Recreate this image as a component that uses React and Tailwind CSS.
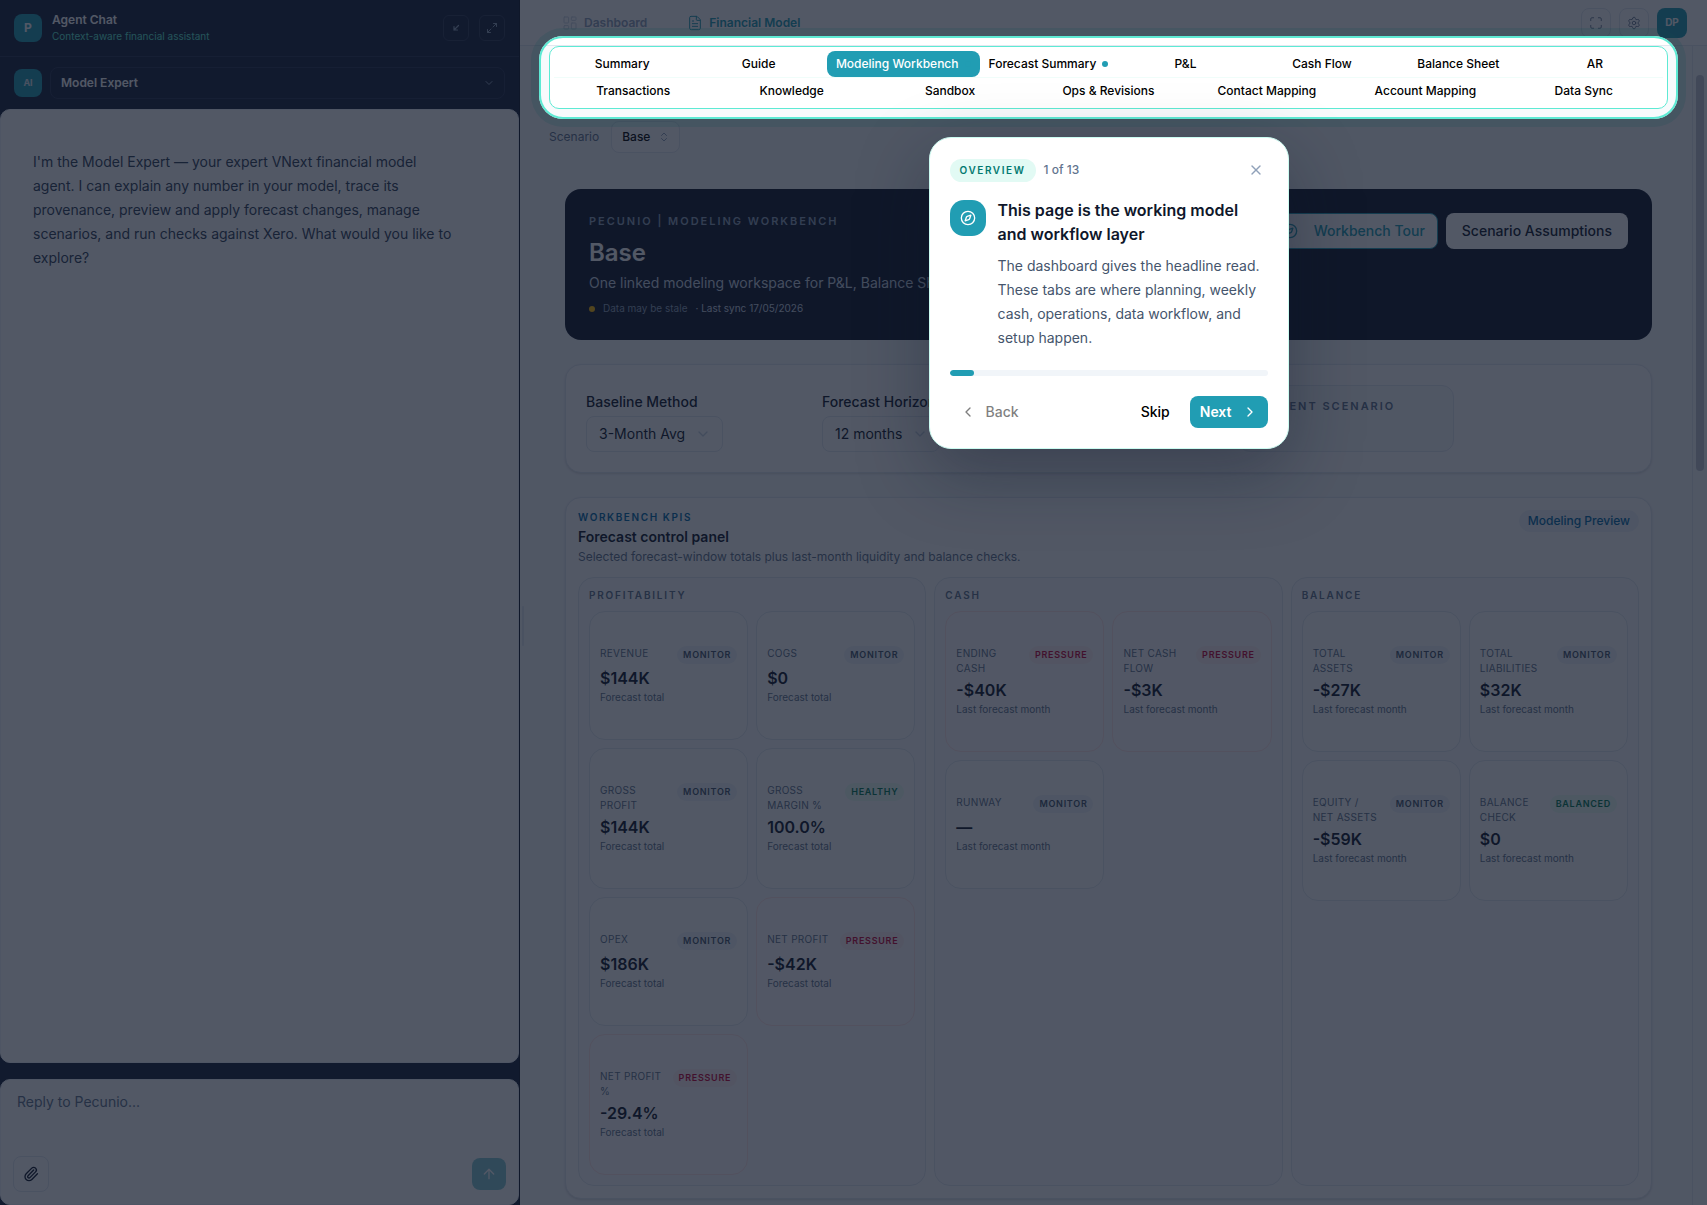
import React, { useState } from 'react';
import {
    ArrowUp,
    ChevronDown,
    ChevronLeft,
    ChevronRight,
    ChevronsUpDown,
    Compass,
    FileText,
    LayoutDashboard,
    Maximize,
    Maximize2,
    Paperclip,
    Settings,
    X,
} from 'lucide-react';

const PRIMARY_TABS = [
    { label: 'Summary' },
    { label: 'Guide' },
    { label: 'Modeling Workbench', active: true, dot: true },
    { label: 'Forecast Summary', dot: true },
    { label: 'P&L' },
    { label: 'Cash Flow' },
    { label: 'Balance Sheet' },
    { label: 'AR' },
];

const SECONDARY_TABS = [
    { label: 'Transactions' },
    { label: 'Knowledge' },
    { label: 'Sandbox' },
    { label: 'Ops & Revisions' },
    { label: 'Contact Mapping' },
    { label: 'Account Mapping' },
    { label: 'Data Sync' },
];

const KPI_GROUPS = [
    {
        title: 'Profitability',
        note: 'Forecast total',
        items: [
            { label: 'Revenue', value: '$144K', status: 'Monitor' },
            { label: 'COGS', value: '$0', status: 'Monitor' },
            { label: 'Gross Profit', value: '$144K', status: 'Monitor' },
            { label: 'Gross Margin %', value: '100.0%', status: 'Healthy' },
            { label: 'OPEX', value: '$186K', status: 'Monitor' },
            { label: 'Net Profit', value: '-$42K', status: 'Pressure' },
            { label: 'Net Profit %', value: '-29.4%', status: 'Pressure' },
        ],
    },
    {
        title: 'Cash',
        note: 'Last forecast month',
        items: [
            { label: 'Ending Cash', value: '-$40K', status: 'Pressure' },
            { label: 'Net Cash Flow', value: '-$3K', status: 'Pressure' },
            { label: 'Runway', value: '—', status: 'Monitor' },
        ],
    },
    {
        title: 'Balance',
        note: 'Last forecast month',
        items: [
            { label: 'Total Assets', value: '-$27K', status: 'Monitor' },
            { label: 'Total Liabilities', value: '$32K', status: 'Monitor' },
            { label: 'Equity / Net Assets', value: '-$59K', status: 'Monitor' },
            { label: 'Balance Check', value: '$0', status: 'Balanced' },
        ],
    },
];

const STATUS_STYLES = {
    Monitor: 'bg-slate-100 text-slate-600',
    Healthy: 'bg-emerald-50 text-emerald-700',
    Balanced: 'bg-emerald-50 text-emerald-700',
    Pressure: 'bg-rose-50 text-rose-700',
};

function ChatPanel() {
    const [message, setMessage] = useState('');

    return (
        <aside className="flex w-[520px] shrink-0 flex-col border-r border-[#0f172a] bg-[#16203a]">
            <header className="flex h-[57px] items-center gap-2.5 border-b border-[#2a3550] px-3.5">
                <div className="flex size-7 items-center justify-center rounded-lg bg-[#219db3] text-xs font-bold text-white">P</div>
                <div className="flex-1">
                    <h2 className="text-xs leading-4 font-semibold text-white">Agent Chat</h2>
                    <p className="text-[10px] leading-4 text-[#5eead4]">Context-aware financial assistant</p>
                </div>
                <div className="flex gap-2.5">
                    <button aria-label="Dock chat" className="flex size-[26px] items-center justify-center rounded-md border border-[#2f3a55] text-slate-400">
                        <svg viewBox="0 0 12 12" className="size-3" fill="none" stroke="currentColor" strokeWidth="1.2" strokeLinecap="round" strokeLinejoin="round">
                            <path d="M8.5 3.5 4 8M4 4.5V8h3.5" />
                        </svg>
                    </button>
                    <button aria-label="Expand chat" className="flex size-[26px] items-center justify-center rounded-md border border-[#2f3a55] text-slate-400">
                        <Maximize2 className="size-3" />
                    </button>
                </div>
            </header>

            <div className="flex items-center gap-2 px-3.5 py-2.5">
                <div className="flex size-7 items-center justify-center rounded-lg bg-[#219db3] text-[9px] font-bold text-slate-200">AI</div>
                <div className="relative flex-1">
                    <select aria-label="Agent" className="h-8 w-full appearance-none rounded-lg border border-[#2a3550] bg-transparent px-2.5 text-xs font-semibold text-white">
                        <option>Model Expert</option>
                    </select>
                    <ChevronDown className="pointer-events-none absolute top-2.5 right-2.5 size-3 text-slate-400" />
                </div>
            </div>

            <div className="flex-1 rounded-[10px] border border-slate-100 bg-white py-10 pr-16 pl-8">
                <p className="text-sm leading-6 text-slate-700">
                    I'm the Model Expert — your expert VNext financial model agent. I can explain any number in your model, trace its
                    provenance, preview and apply forecast changes, manage scenarios, and run checks against Xero. What would you like to
                    explore?
                </p>
            </div>

            <form className="mt-4 flex h-[126px] flex-col justify-between rounded-[10px] border border-slate-100 bg-white p-3" onSubmit={(e) => e.preventDefault()}>
                <textarea
                    aria-label="Message"
                    rows={1}
                    placeholder="Reply to Pecunio..."
                    value={message}
                    onChange={(e) => setMessage(e.target.value)}
                    className="resize-none px-1 text-sm leading-5 text-slate-900 placeholder:text-slate-500"
                />
                <div className="flex items-center justify-between">
                    <button type="button" aria-label="Attach file" className="flex size-9 items-center justify-center rounded-lg border border-slate-200 bg-white text-slate-900">
                        <Paperclip className="size-4" />
                    </button>
                    <button type="submit" aria-label="Send" className="flex h-8 w-[34px] items-center justify-center rounded-lg bg-[#86c9d5] text-white">
                        <ArrowUp className="size-4" />
                    </button>
                </div>
            </form>
        </aside>
    );
}

function TopBar() {
    return (
        <header className="flex h-[46px] shrink-0 items-center justify-between border-b border-slate-200 bg-white pr-5 pl-[42px]">
            <nav className="flex gap-10 text-xs font-semibold">
                <a href="#dashboard" className="flex items-center gap-1.5 text-slate-400">
                    <LayoutDashboard className="size-4 text-slate-300" strokeWidth={1.5} />
                    Dashboard
                </a>
                <a href="#model" className="flex items-center gap-1.5 text-[#219db3]">
                    <FileText className="size-4" strokeWidth={1.5} />
                    Financial Model
                </a>
            </nav>
            <div className="flex gap-2">
                <button aria-label="Full screen" className="flex size-[30px] items-center justify-center rounded-lg border border-slate-200 text-slate-500">
                    <Maximize className="size-3.5" strokeWidth={1.5} />
                </button>
                <button aria-label="Settings" className="flex size-[30px] items-center justify-center rounded-lg border border-slate-200 text-slate-500">
                    <Settings className="size-3.5" strokeWidth={1.5} />
                </button>
                <button className="flex size-[30px] items-center justify-center rounded-lg bg-[#219db3] text-[10px] font-bold text-white">DP</button>
            </div>
        </header>
    );
}

function TabRow({ tabs }) {
    return (
        <div className="flex">
            {tabs.map((tab) => (
                <button
                    key={tab.label}
                    className={`flex h-[26px] flex-1 items-center justify-center gap-1.5 rounded-lg px-[9px] text-xs font-medium whitespace-nowrap ${tab.active ? 'bg-[#219db3] text-white' : 'text-black'}`}
                >
                    {tab.label}
                    {tab.dot && <span className="size-1.5 rounded-full bg-[#219db3]" />}
                </button>
            ))}
        </div>
    );
}

function Hero() {
    return (
        <section className="flex items-start justify-between rounded-2xl bg-[#0f172a] p-6">
            <div>
                <p className="text-[11px] leading-4 font-semibold tracking-[0.18em] text-slate-400 uppercase">Pecunio | Modeling Workbench</p>
                <h1 className="mt-2 text-2xl font-semibold text-white">Base</h1>
                <p className="mt-1 text-sm text-slate-300">One linked modeling workspace for P&L, Balance Sheet</p>
                <p className="mt-2 flex items-center gap-2 text-[10px] leading-[15px] text-slate-400">
                    <span className="size-1.5 rounded-full bg-amber-400" />
                    Data may be stale
                    <span className="text-slate-300">· Last sync 17/05/2026</span>
                </p>
            </div>
            <div className="flex gap-2 text-sm font-medium">
                <button className="flex h-9 items-center gap-4 rounded-lg border border-[#219db3] bg-white px-3 text-[#219db3]">
                    <Compass className="size-4" />
                    Workbench Tour
                </button>
                <button className="h-9 rounded-lg bg-white px-4 text-slate-900">Scenario Assumptions</button>
            </div>
        </section>
    );
}

function Field({ id, label, value }) {
    return (
        <div className="flex flex-col items-start justify-end gap-1">
            <label htmlFor={id} className="text-sm font-medium text-slate-900">{label}</label>
            <div className="relative">
                <select id={id} className="h-9 appearance-none rounded-lg border border-slate-200 bg-transparent pr-9 pl-3 text-sm text-slate-900">
                    <option>{value}</option>
                </select>
                <ChevronDown className="pointer-events-none absolute top-2.5 right-3 size-4 text-slate-300" />
            </div>
        </div>
    );
}

function KpiCard({ label, value, status, note }) {
    const tint = status === 'Pressure' ? 'border-rose-100 bg-[#fffcfd]' : 'border-slate-200 bg-white';

    return (
        <article className={`rounded-2xl border px-2.5 py-[34px] ${tint}`}>
            <div className="flex items-start justify-between gap-2">
                <h4 className="text-[10px] leading-[15px] tracking-[0.03em] text-slate-500 uppercase">{label}</h4>
                <span className={`rounded-full px-1.5 py-0.5 text-[9px] leading-[14px] font-semibold tracking-[0.08em] uppercase ${STATUS_STYLES[status]}`}>
                    {status}
                </span>
            </div>
            <p className="mt-1 text-base leading-5 font-semibold text-slate-900">{value}</p>
            <p className="mt-0.5 text-[10px] leading-[15px] text-slate-500">{note}</p>
        </article>
    );
}

function KpiPanel() {
    return (
        <section className="rounded-2xl border border-slate-200 bg-white p-3 shadow-sm">
            <div className="mb-3 flex items-start justify-between">
                <div>
                    <p className="text-[10px] leading-[15px] font-semibold tracking-[0.16em] text-sky-700 uppercase">Workbench KPIs</p>
                    <h2 className="mt-0.5 text-sm font-semibold text-slate-900">Forecast control panel</h2>
                    <p className="mt-0.5 text-xs text-slate-500">Selected forecast-window totals plus last-month liquidity and balance checks.</p>
                </div>
                <span className="rounded-full border border-slate-100 bg-slate-100 px-2 py-0.5 text-xs font-medium text-sky-700">Modeling Preview</span>
            </div>
            <div className="grid grid-cols-3 gap-2">
                {KPI_GROUPS.map((group) => (
                    <div key={group.title} className="rounded-2xl border border-slate-200 bg-slate-50/50 p-2.5">
                        <h3 className="mb-2 text-[10px] leading-[15px] font-semibold tracking-[0.18em] text-slate-500 uppercase">{group.title}</h3>
                        <div className="grid grid-cols-2 gap-2">
                            {group.items.map((item) => (
                                <KpiCard key={item.label} note={group.note} {...item} />
                            ))}
                        </div>
                    </div>
                ))}
            </div>
        </section>
    );
}

/**
 * Dims the page around the highlighted tabs and shows the tour step below them.
 */
function Tour({ step, total }) {
    return (
        <div className="absolute top-9 right-[29px] left-[539px] flex flex-col items-center gap-[18px]">
            <div className="h-[83px] w-full rounded-3xl border-2 border-[#5eead4] shadow-[0_0_0_9999px_rgba(15,23,42,0.72),0_0_0_8px_rgba(45,212,191,0.2)]" />
            <div role="dialog" aria-labelledby="tour-title" className="w-[360px] rounded-[22px] border border-teal-100 bg-white p-5 shadow-[0_24px_70px_rgba(15,23,42,0.35)]">
                <div className="flex h-6 items-center gap-2">
                    <span className="rounded-full bg-[#e2faf4] px-2.5 py-1 text-[10px] leading-[15px] font-semibold tracking-[0.16em] text-teal-700 uppercase">Overview</span>
                    <span className="flex-1 text-xs font-medium text-slate-500">{step} of {total}</span>
                    <button aria-label="Close tour" className="flex size-6 items-center justify-center text-slate-400">
                        <X className="size-4" />
                    </button>
                </div>
                <div className="mt-4 flex items-start gap-3">
                    <div className="mt-0.5 flex size-9 shrink-0 items-center justify-center rounded-[14px] bg-[#219db3] text-white">
                        <Compass className="size-4" />
                    </div>
                    <div>
                        <h2 id="tour-title" className="text-base font-semibold text-slate-900">This page is the working model and workflow layer</h2>
                        <p className="mt-2 text-sm leading-6 text-slate-600">
                            The dashboard gives the headline read. These tabs are where planning, weekly cash, operations, data workflow, and setup happen.
                        </p>
                    </div>
                </div>
                <div className="mt-5 h-1.5 overflow-hidden rounded-full bg-slate-100">
                    <div className="h-full rounded-full bg-[#219db3]" style={{ width: `${(step / total) * 100}%` }} />
                </div>
                <div className="mt-5 flex items-center justify-between text-sm font-medium">
                    <button disabled className="flex h-8 items-center gap-2.5 px-2.5 text-black opacity-50">
                        <ChevronLeft className="size-4" />
                        Back
                    </button>
                    <div className="flex items-center gap-2">
                        <button className="h-8 px-3 text-black">Skip</button>
                        <button className="flex h-8 items-center gap-2.5 rounded-lg bg-[#219db3] px-2.5 font-semibold text-white">
                            Next
                            <ChevronRight className="size-4" />
                        </button>
                    </div>
                </div>
            </div>
        </div>
    );
}

function App() {
    return (
        <div className="relative flex h-screen overflow-hidden bg-slate-50 font-['Inter',sans-serif]">
            <ChatPanel />
            <div className="flex min-w-0 flex-1 flex-col">
                <TopBar />
                <div className="flex min-h-0 flex-1">
                    <div className="flex w-[5px] shrink-0 items-center justify-center">
                        <div className="h-10 w-0.5 rounded-full bg-slate-200" />
                    </div>
                    <main className="flex-1 overflow-hidden px-6">
                        <nav className="rounded-[10px] border border-[#5eead4] bg-white p-1">
                            <TabRow tabs={PRIMARY_TABS} />
                            <div className="h-px bg-teal-50" />
                            <TabRow tabs={SECONDARY_TABS} />
                        </nav>
                        <div className="mt-3 flex items-center gap-3 text-xs">
                            <label htmlFor="scenario" className="text-slate-500">Scenario</label>
                            <div className="relative">
                                <select id="scenario" className="h-8 appearance-none rounded-lg border border-slate-200 bg-white pr-7 pl-2.5 font-medium text-black">
                                    <option>Base</option>
                                </select>
                                <ChevronsUpDown className="pointer-events-none absolute top-2.5 right-2.5 size-3 text-slate-400" />
                            </div>
                        </div>
                        <div className="mt-9 flex flex-col gap-6 px-4">
                            <Hero />
                            <section className="grid grid-cols-[216px_216px_396px] gap-5 rounded-2xl border border-slate-200 bg-white p-5 shadow-sm">
                                <Field id="baseline" label="Baseline Method" value="3-Month Avg" />
                                <Field id="horizon" label="Forecast Horizon" value="12 months" />
                                <div className="h-[67px] w-[216px] justify-self-end rounded-xl border border-slate-200 bg-slate-50 px-3 py-3">
                                    <p className="text-[11px] leading-4 font-semibold tracking-[0.18em] text-slate-500 uppercase">Current Scenario</p>
                                </div>
                            </section>
                            <KpiPanel />
                        </div>
                    </main>
                    <div className="w-[15px] shrink-0 border-l border-slate-200 px-[3px] pt-[29px]">
                        <div className="h-[396px] w-2 rounded-full bg-[#c1c7d0]" />
                    </div>
                </div>
            </div>
            <Tour step={1} total={13} />
        </div>
    );
}

export default App;
